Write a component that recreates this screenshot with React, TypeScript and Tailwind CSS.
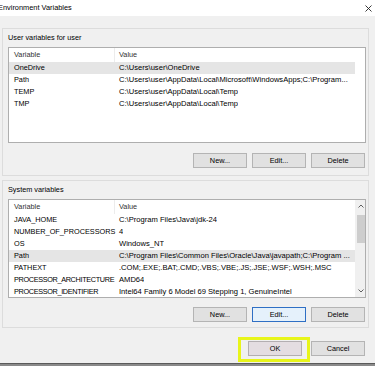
import React from 'react';

type EnvRow = { name: string; value: string; selected?: boolean; tight?: boolean };

const userVars: EnvRow[] = [
  { name: 'OneDrive', value: 'C:\\Users\\user\\OneDrive', selected: true },
  { name: 'Path', value: 'C:\\Users\\user\\AppData\\Local\\Microsoft\\WindowsApps;C:\\Program...' },
  { name: 'TEMP', value: 'C:\\Users\\user\\AppData\\Local\\Temp' },
  { name: 'TMP', value: 'C:\\Users\\user\\AppData\\Local\\Temp' },
];

const systemVars: EnvRow[] = [
  { name: 'JAVA_HOME', value: 'C:\\Program Files\\Java\\jdk-24' },
  { name: 'NUMBER_OF_PROCESSORS', value: '4' },
  { name: 'OS', value: 'Windows_NT' },
  { name: 'Path', value: 'C:\\Program Files\\Common Files\\Oracle\\Java\\javapath;C:\\Program ...', selected: true },
  { name: 'PATHEXT', value: '.COM;.EXE;.BAT;.CMD;.VBS;.VBE;.JS;.JSE;.WSF;.WSH;.MSC' },
  { name: 'PROCESSOR_ARCHITECTURE', value: 'AMD64', tight: true },
  { name: 'PROCESSOR_IDENTIFIER', value: 'Intel64 Family 6 Model 69 Stepping 1, GenuineIntel', tight: true },
];

const WinButton = ({ label, focused, tint }: { label: string; focused?: boolean; tint?: boolean }) => (
  <button
    className={
      'w-[54px] h-[15px] flex items-center justify-center border text-[7.3px] leading-none text-black ' +
      (focused
        ? 'bg-[#e5f1fb] border-[#2f6fc4]'
        : tint
        ? 'bg-[#e4dde1] border-[#b3aeb1]'
        : 'bg-[#e1e1e1] border-[#b4b4b4]')
    }
  >
    {label}
  </button>
);

const VarList = ({ rows, height, scroll }: { rows: EnvRow[]; height: string; scroll?: boolean }) => (
  <div className={`ml-[5px] mr-[2px] ${height} bg-white border border-[#aeaeae] flex overflow-hidden`}>
    <div className="flex-1 flex flex-col">
      <div className="h-[14px] shrink-0 flex items-center text-[#333]">
        <div className="w-[106px] h-full flex items-center pl-[5px] border-r border-[#ececec]">Variable</div>
        <div className="pl-[4px]">Value</div>
      </div>
      {rows.map((r) => (
        <div
          key={r.name}
          className={`h-[12px] shrink-0 flex items-center whitespace-nowrap w-[346px] ${r.selected ? 'bg-[#e5e5e5]' : ''}`}
        >
          <div className={`w-[106px] shrink-0 pl-[5px] ${r.tight ? 'tracking-[-0.35px]' : ''}`}>{r.name}</div>
          <div className="pl-[4px] overflow-hidden text-[7.6px]">{r.value}</div>
        </div>
      ))}
    </div>
    {scroll && (
      <div className="w-[11px] shrink-0 bg-[#f0f0f0] flex flex-col items-center">
        <div className="h-[12px] flex items-center justify-center">
          <svg width="6" height="4" viewBox="0 0 6 4">
            <path d="M0.5 3.5 L3 1 L5.5 3.5" fill="none" stroke="#606060" strokeWidth="1" />
          </svg>
        </div>
        <div className="mt-[3px] w-[8px] h-[28px] bg-[#cdcdcd]" />
        <div className="flex-1" />
        <div className="h-[12px] flex items-center justify-center">
          <svg width="6" height="4" viewBox="0 0 6 4">
            <path d="M0.5 0.5 L3 3 L5.5 0.5" fill="none" stroke="#606060" strokeWidth="1" />
          </svg>
        </div>
      </div>
    )}
  </div>
);

const Group = ({ title, children }: { title: string; children: React.ReactNode }) => (
  <div className="h-[148px] border border-[#dcdcdc] flex flex-col">
    <div className="h-[18px] shrink-0 flex items-center pl-[5px] text-black">{title}</div>
    {children}
  </div>
);

export default function App() {
  return (
    <div
      className="w-[375px] h-[366px] bg-[#f0f0f0] flex flex-col overflow-hidden text-[7.3px] leading-none text-black"
      style={{ fontFamily: '"Liberation Sans", Arial, sans-serif' }}
    >
      <div className="h-[16px] shrink-0 bg-white flex items-center justify-between">
        <span className="ml-[-2px] text-[7.4px]">Environment Variables</span>
        <svg className="mr-[3px]" width="7" height="7" viewBox="0 0 7 7">
          <path d="M0.5 0.5 L6.5 6.5 M6.5 0.5 L0.5 6.5" stroke="#222" strokeWidth="0.9" />
        </svg>
      </div>

      <div className="px-[2px] pt-[12px] pr-[6px] flex flex-col">
        <Group title="User variables for user">
          <VarList rows={userVars} height="h-[96px]" />
          <div className="mt-[10px] flex justify-end gap-[5px] pr-[3px]">
            <WinButton label="New..." />
            <WinButton label="Edit..." />
            <WinButton label="Delete" />
          </div>
        </Group>

        <div className="mt-[4px]">
          <Group title="System variables">
            <VarList rows={systemVars} height="h-[99px]" scroll />
            <div className="mt-[9px] flex justify-end gap-[5px] pr-[3px]">
              <WinButton label="New..." />
              <WinButton label="Edit..." focused />
              <WinButton label="Delete" />
            </div>
          </Group>
        </div>
      </div>

      <div className="relative mt-[13px] flex justify-end gap-[9px] pr-[10px]">
        <WinButton label="OK" tint />
        <WinButton label="Cancel" />
        <div className="absolute left-[238px] top-[-4px] w-[72px] h-[25px] border-[3px] border-[#e8f51a]" />
      </div>

      <div className="mt-auto h-[3px] shrink-0 bg-[#8a8a8a] border-t border-[#5a5a5a]" />
    </div>
  );
}
